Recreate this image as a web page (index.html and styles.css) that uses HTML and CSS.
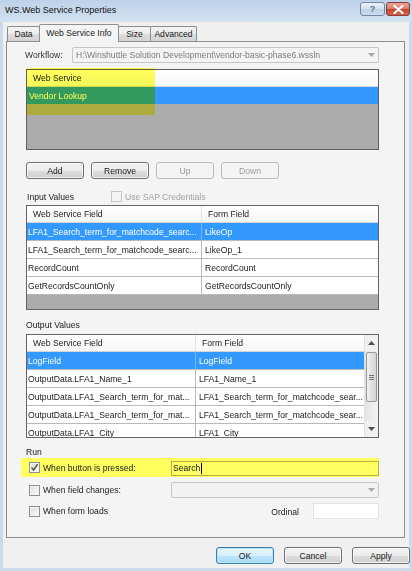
FILE: index.html
```html
<!DOCTYPE html>
<html>
<head>
<meta charset="utf-8">
<title>WS.Web Service Properties</title>
<link rel="stylesheet" href="styles.css">
</head>
<body>
<div class="window">
  <div class="titlebar">
    <span class="title">WS.Web Service Properties</span>
    <div class="caption">
      <div class="cbtn help">?</div>
      <div class="cbtn close">
        <svg width="11" height="9" viewBox="0 0 11 9"><path d="M1.5 1 L9.5 8 M9.5 1 L1.5 8" stroke="#fff" stroke-width="2.2" stroke-linecap="round"/></svg>
      </div>
    </div>
  </div>
  <div class="client">
    <div class="tabs">
      <div class="tab t-data">Data</div>
      <div class="tab t-ws active">Web Service Info</div>
      <div class="tab t-size">Size</div>
      <div class="tab t-adv">Advanced</div>
    </div>
    <div class="panel">
      <div class="workflow-row">
        <span class="wf-label">Workflow:</span>
        <div class="combo disabled">
          <span class="combo-text">H:\Winshuttle Solution Development\vendor-basic-phase6.wssln</span>
          <span class="combo-arrow"><svg width="7" height="4" viewBox="0 0 7 4"><path d="M0 0 H7 L3.5 4 Z" fill="#a8a8a8"/></svg></span>
        </div>
      </div>

      <div class="list ws-list">
        <div class="lrow lhead">Web Service</div>
        <div class="lrow lsel">Vendor Lookup</div>
        <div class="hl-ws"></div>
      </div>

      <div class="btn-row">
        <div class="btn">Add</div>
        <div class="btn">Remove</div>
        <div class="btn dis">Up</div>
        <div class="btn dis">Down</div>
      </div>

      <div class="sec-row">
        <span class="sec-label iv">Input Values</span>
        <span class="chk dis"></span>
        <span class="dis-text">Use SAP Credentials</span>
      </div>

      <div class="grid in-grid">
        <div class="cols">
          <div class="grow ghead"><div class="c1">Web Service Field</div><div class="c2">Form Field</div></div>
          <div class="grow sel"><div class="c1">LFA1_Search_term_for_matchcode_searc...</div><div class="c2">LikeOp</div></div>
          <div class="grow"><div class="c1">LFA1_Search_term_for_matchcode_searc...</div><div class="c2">LikeOp_1</div></div>
          <div class="grow"><div class="c1">RecordCount</div><div class="c2">RecordCount</div></div>
          <div class="grow"><div class="c1">GetRecordsCountOnly</div><div class="c2">GetRecordsCountOnly</div></div>
          <div class="gfill"></div>
        </div>
      </div>

      <div class="sec-row ov-row">
        <span class="sec-label">Output Values</span>
      </div>

      <div class="grid out-grid">
        <div class="cols">
          <div class="grow ghead"><div class="c1">Web Service Field</div><div class="c2">Form Field</div></div>
          <div class="grow sel"><div class="c1">LogField</div><div class="c2">LogField</div></div>
          <div class="grow"><div class="c1">OutputData.LFA1_Name_1</div><div class="c2">LFA1_Name_1</div></div>
          <div class="grow"><div class="c1">OutputData.LFA1_Search_term_for_mat...</div><div class="c2">LFA1_Search_term_for_matchcode_sear...</div></div>
          <div class="grow"><div class="c1">OutputData.LFA1_Search_term_for_mat...</div><div class="c2">LFA1_Search_term_for_matchcode_sear...</div></div>
          <div class="grow"><div class="c1">OutputData.LFA1_City</div><div class="c2">LFA1_City</div></div>
        </div>
        <div class="vscroll">
          <div class="sb-btn"><svg width="7" height="4" viewBox="0 0 7 4"><path d="M3.5 0 L7 4 H0 Z" fill="#4d4d4d"/></svg></div>
          <div class="sb-track">
            <div class="sb-thumb"><span class="grip"></span><span class="grip"></span><span class="grip"></span></div>
          </div>
          <div class="sb-btn"><svg width="7" height="4" viewBox="0 0 7 4"><path d="M0 0 H7 L3.5 4 Z" fill="#4d4d4d"/></svg></div>
        </div>
      </div>

      <div class="sec-row run-row">
        <span class="sec-label">Run</span>
      </div>

      <div class="run-line hl">
        <div class="run-left"><span class="chk checked"><svg width="9" height="9" viewBox="0 0 9 9"><path d="M1.5 4.5 L3.6 7 L7.6 1.2" fill="none" stroke="#4b5a3a" stroke-width="1.5"/></svg></span><span class="run-label">When button is pressed:</span></div>
        <div class="tbox yellow"><span class="tval">Search</span><span class="caret"></span></div>
      </div>

      <div class="run-line">
        <div class="run-left"><span class="chk"></span><span class="run-label">When field changes:</span></div>
        <div class="combo disabled run-combo">
          <span class="combo-text"></span>
          <span class="combo-arrow"><svg width="7" height="4" viewBox="0 0 7 4"><path d="M0 0 H7 L3.5 4 Z" fill="#a8a8a8"/></svg></span>
        </div>
      </div>

      <div class="run-line">
        <div class="run-left"><span class="chk"></span><span class="run-label">When form loads</span></div>
        <span class="ord-label">Ordinal</span>
        <div class="tbox ord"></div>
      </div>
    </div>

    <div class="dlg-btns">
      <div class="btn dlg default">OK</div>
      <div class="btn dlg">Cancel</div>
      <div class="btn dlg">Apply</div>
    </div>
  </div>
</div>
</body>
</html>
```

FILE: styles.css
```css
* { box-sizing: border-box; }
html, body { margin: 0; padding: 0; }
body {
  width: 412px;
  height: 571px;
  overflow: hidden;
  font-family: "Liberation Sans", Arial, sans-serif;
  font-size: 8.6px;
  color: #1a1a1a;
  background: #cddcee;
}
.window {
  width: 412px;
  height: 571px;
  display: flex;
  flex-direction: column;
  background: #cbdaed;
}
.titlebar {
  height: 22px;
  display: flex;
  align-items: flex-start;
  justify-content: space-between;
  padding: 0 2px 0 5px;
  background: linear-gradient(#bdd1e9, #d3e1f1);
}
.title {
  font-size: 9px;
  line-height: 20px;
  color: #111;
}
.caption {
  display: flex;
  gap: 1px;
  margin-top: 2px;
}
.cbtn {
  height: 14px;
  border: 1px solid #7187a5;
  border-radius: 3px;
  display: flex;
  align-items: center;
  justify-content: center;
}
.help {
  width: 25px;
  background: linear-gradient(#eaf1f9, #d2e0ef 50%, #bfd2e8 51%, #cadbee);
  color: #5a6d88;
  font-size: 9px;
  font-weight: bold;
}
.close {
  width: 24px;
  border-color: #8a3c33;
  background: linear-gradient(#eaa696, #d77a66 50%, #c5432f 51%, #d2654f);
}
.client {
  flex: 1;
  margin: 0 3px 3px;
  background: #f0f0f0;
  display: flex;
  flex-direction: column;
  padding: 2px 0 0 3px;
}
.tabs {
  display: flex;
  height: 17px;
  align-items: flex-end;
  margin-left: 1px;
  position: relative;
  z-index: 2;
}
.tab {
  height: 15px;
  border: 1px solid #8c8e94;
  border-bottom: none;
  border-radius: 2px 2px 0 0;
  background: linear-gradient(#f3f3f3, #ececec 50%, #dedede 51%, #d3d3d3);
  display: flex;
  align-items: center;
  justify-content: center;
  color: #1a1a1a;
}
.t-data { width: 33px; }
.t-ws { width: 80px; margin-left: -1px; }
.t-size { width: 33px; margin-left: -1px; }
.t-adv { width: 47px; margin-left: -1px; }
.tab.active {
  height: 18px;
  margin-bottom: -1px;
  background: #f4f4f4;
  position: relative;
  z-index: 3;
  padding-bottom: 2px;
}
.panel {
  width: 399px;
  height: 497px;
  border: 1px solid #8c8e94;
  background: #f4f4f4;
  padding: 5px 25px 0 19px;
  display: flex;
  flex-direction: column;
  position: relative;
  z-index: 1;
}
.workflow-row {
  display: flex;
  height: 16px;
  align-items: center;
}
.wf-label {
  width: 46px;
  margin-left: -1px;
  margin-right: 1px;
  color: #333;
}
.combo {
  flex: 1;
  height: 16px;
  border: 1px solid #c2c6cb;
  border-radius: 2px;
  display: flex;
  align-items: center;
  background: #f4f4f4;
}
.combo.disabled { color: #7a7a7a; }
.combo-text {
  flex: 1;
  padding-left: 3px;
  white-space: nowrap;
  overflow: hidden;
}
.combo-arrow {
  width: 14px;
  display: flex;
  justify-content: center;
  align-items: center;
}
.list {
  margin-top: 6px;
  height: 81px;
  border: 1px solid #5f5f5f;
  background: #ababab;
  position: relative;
}
.lrow {
  height: 17px;
  display: flex;
  align-items: center;
  white-space: nowrap;
}
.lhead {
  background: linear-gradient(#ffffff, #f6f7f9);
  border-bottom: 1px solid #d8d8d8;
  padding-left: 6px;
}
.lsel {
  background: #3399ff;
  color: #fff;
  padding-left: 2px;
}
.hl-ws {
  position: absolute;
  left: 0;
  top: -2px;
  width: 128px;
  height: 47px;
  background: #ffff5c;
  mix-blend-mode: multiply;
}
.btn-row {
  display: flex;
  gap: 7px;
  margin-top: 12px;
}
.btn {
  width: 58px;
  height: 17px;
  border: 1px solid #707070;
  border-radius: 3px;
  background: linear-gradient(#f3f3f3, #ebebeb 50%, #dddddd 51%, #cfcfcf);
  display: flex;
  align-items: center;
  justify-content: center;
  color: #1a1a1a;
  box-shadow: inset 0 0 0 1px rgba(255,255,255,0.7);
}
.btn.dis {
  border-color: #b9bdc0;
  background: #f4f4f4;
  color: #9a9a9a;
  box-shadow: none;
}
.sec-row {
  display: flex;
  align-items: center;
  height: 13px;
  margin-top: 11px;
}
.sec-label { color: #1a1a1a; }
.iv { width: 84px; margin-left: 1px; }
.chk {
  width: 11px;
  height: 11px;
  border: 1px solid #8f8f8f;
  background: linear-gradient(135deg, #dcdcdc, #fbfbfb);
  box-shadow: inset 0 0 0 1px #f4f4f4;
  display: flex;
  align-items: center;
  justify-content: center;
  flex: none;
}
.chk.dis {
  border-color: #c6c6c6;
  background: #f4f4f4;
}
.dis-text {
  margin-left: 3px;
  color: #a0a0a0;
}
.grid {
  margin-top: 2px;
  border: 1px solid #646464;
  background: #ababab;
  display: flex;
  overflow: hidden;
}
.in-grid { height: 105px; }
.out-grid { height: 104px; }
.cols {
  flex: 1;
  display: flex;
  flex-direction: column;
  overflow: hidden;
}
.grow {
  height: 18px;
  display: flex;
  flex: none;
  background: #fff;
  border-bottom: 1px solid #b9b9b9;
  white-space: nowrap;
}
.grow > div {
  display: flex;
  align-items: center;
  overflow: hidden;
}
.in-grid .c1 { width: 175px; padding-left: 1px; border-right: 1px solid #b9b9b9; }
.out-grid .c1 { width: 169px; padding-left: 1px; border-right: 1px solid #b9b9b9; }
.c2 { flex: 1; padding-left: 3px; }
.grow.ghead {
  height: 17px;
  background: linear-gradient(#ffffff, #f5f6f8);
  border-bottom: 1px solid #d5d5d5;
}
.ghead > div { padding-left: 6px !important; }
.ghead .c1 { border-right-color: #e2e2e2; }
.grow.sel {
  background: #3399ff;
  color: #fff;
}
.grow.sel .c1 { border-right-color: #74b6f8; }
.gfill { flex: 1; background: #ababab; }
.vscroll {
  width: 14px;
  display: flex;
  flex-direction: column;
  background: #ececec;
  border-left: 1px solid #e0e0e0;
}
.sb-btn {
  height: 16px;
  display: flex;
  align-items: center;
  justify-content: center;
  background: #f0f0f0;
}
.sb-track {
  flex: 1;
  padding-top: 1px;
  background: linear-gradient(90deg, #e4e4e4, #f2f2f2);
}
.sb-thumb {
  margin: 0 1px;
  height: 50px;
  border: 1px solid #979797;
  border-radius: 2px;
  background: linear-gradient(90deg, #f2f2f2, #e0e0e0 50%, #d4d4d4);
  display: flex;
  flex-direction: column;
  align-items: center;
  justify-content: center;
  gap: 1px;
}
.grip {
  width: 5px;
  height: 1px;
  background: #6f6f6f;
}
.ov-row { margin-top: 8px; height: 14px; }
.run-row { margin-top: 7px; }
.run-line {
  display: flex;
  align-items: center;
  height: 16px;
  margin-top: 5px;
}
.run-line.hl {
  height: 19px;
  margin-top: 0;
  margin-left: -5px;
  background: #fefe5e;
}
.run-left {
  width: 150px;
  display: flex;
  align-items: center;
  padding-left: 3px;
}
.run-line.hl .run-left { width: 150px; padding-left: 8px; }
.run-line:not(.hl) .run-left { width: 145px; }
.run-label { margin-left: 3px; }
.tbox {
  height: 16px;
  border: 1px solid #c9cdd2;
  background: #fff;
  display: flex;
  align-items: center;
}
.tbox.yellow {
  flex: 1;
  height: 15px;
  margin-top: 1px;
  background: #ffff64;
  border-color: #b4b43c;
  padding-left: 1px;
  color: #111;
}
.caret {
  width: 1px;
  height: 11px;
  background: #000;
  margin-left: 1px;
}
.run-combo { flex: 1; background: #f2f2f2; border-color: #c7c7c7; }
.ord-label {
  margin-left: auto;
  margin-top: 1px;
  margin-right: 14px;
}
.tbox.ord {
  width: 66px;
  border-color: #e0e3e7;
}
.dlg-btns {
  display: flex;
  justify-content: flex-end;
  gap: 10px;
  margin-top: 9px;
  padding-right: 0;
  margin-right: -1px;
}
.btn.dlg {
  width: 58px;
}
.btn.dlg.default {
  border-color: #3c7fb1;
  box-shadow: inset 0 0 0 1px #b9e4f8;
  background: linear-gradient(#eaf6fd, #d9f0fc 50%, #bee6fd 51%, #a7d9f5);
}
```
